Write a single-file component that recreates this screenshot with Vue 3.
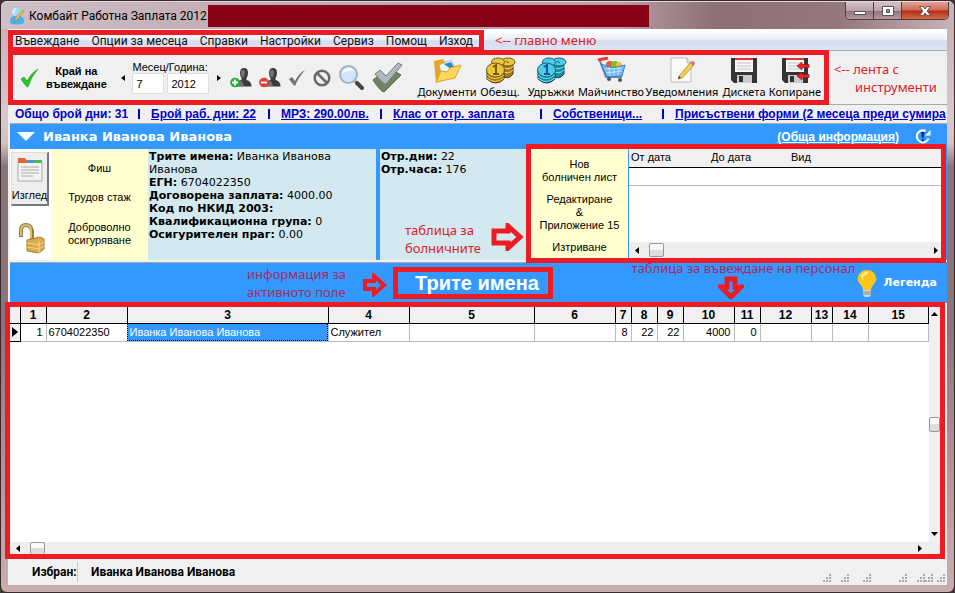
<script setup>
import { ref } from 'vue'

const month = ref('7')
const year = ref('2012')

const menu = ['Въвеждане', 'Опции за месеца', 'Справки', 'Настройки', 'Сервиз', 'Помощ', 'Изход']

const tools = [
  { label: 'Документи', icon: 'folder', width: 62 },
  { label: 'Обезщ.', icon: 'gold', width: 44 },
  { label: 'Удръжки', icon: 'blue', width: 58 },
  { label: 'Майчинство', icon: 'cart', width: 62 },
  { label: 'Уведомления', icon: 'note', width: 80 },
  { label: 'Дискета', icon: 'disk', width: 44 },
  { label: 'Копиране', icon: 'copy', width: 58 },
]

const columns = [26, 81, 201, 81, 125, 81, 16, 26, 26, 51, 26, 51, 21, 36, 0]
const row = ['1', '6704022350', 'Иванка Иванова Иванова', 'Служител', '', '', '8', '22', '22', '4000', '0', '', '', '', '']
const isNumber = (i) => [0, 6, 7, 8, 9, 10].includes(i)

const person = [
  ['Трите имена:', 'Иванка Иванова Иванова'],
  ['ЕГН:', '6704022350'],
  ['Договорена заплата:', '4000.00'],
  ['Код по НКИД 2003:', ''],
  ['Квалификационна група:', '0'],
  ['Осигурителен праг:', '0.00'],
]
</script>

<template>
  <div class="window">
    <header class="titlebar">
      <svg class="app-icon" width="16" height="18" viewBox="0 0 16 18">
        <circle cx="8" cy="5" r="4.5" fill="#9adcff" />
        <path d="M1 16Q0 8 8 9Q16 8 15 16Q8 19 1 16Z" fill="#48b0ee" />
        <path d="M3 6Q3 1 8 1Q5 4 6 8Z" fill="#d9f4ff" />
        <path d="M6 12L13 3L15 4L8 13L5 14Z" fill="#f3c44f" stroke="#a77b2a" stroke-width=".6" />
      </svg>
      <h1>Комбайт Работна Заплата 2012</h1>
      <div class="redacted"></div>
      <div class="window-buttons">
        <button type="button" aria-label="Минимизиране"><svg width="12" height="10" viewBox="0 0 12 10"><rect x=".5" y="5.5" width="11" height="3" fill="#fff" stroke="#555" /></svg></button>
        <button type="button" aria-label="Възстановяване"><svg width="12" height="10" viewBox="0 0 12 10"><path d="M.5.5h11v9H.5zM4.500 3.500v3h3v-3z" fill="#fff" fill-rule="evenodd" stroke="#555" /></svg></button>
        <button type="button" class="close" aria-label="Затваряне"><svg width="12" height="10" viewBox="0 0 12 10"><path d="M.5.5h3.500L6 3 8 .5h3.500L8 5l3.500 4.500H8L6 7 4 9.500H.5L4 5z" fill="#fff" stroke="#5d3a3a" stroke-width=".8" /></svg></button>
      </div>
    </header>

    <main class="client">
      <div class="menu-row">
        <nav class="menu"><a v-for="item in menu" :key="item" href="#">{{ item }}</a></nav>
        <span class="note">&lt;-- главно меню</span>
      </div>

      <div class="tool-row">
        <div class="toolbar">
          <button type="button" class="finish">
            <svg width="19" height="20" viewBox="0 0 19 20"><path d="M1 11L4 9L7 13Q11 5 18 1Q11 9 8 19Q6 19 1 11Z" fill="#2cc42c" stroke="#159a1a" stroke-width=".6" /></svg>
            <span>Край на<br>въвеждане</span>
          </button>
          <button type="button" class="step" aria-label="Предишен"><svg width="4" height="6" viewBox="0 0 4 6"><path d="M4 0v6L0 3z" /></svg></button>
          <fieldset class="period">
            <legend>Месец/Година:</legend>
            <input v-model="month" class="month" aria-label="Месец">
            <input v-model="year" class="year" aria-label="Година">
          </fieldset>
          <button type="button" class="step" aria-label="Следващ"><svg width="4" height="6" viewBox="0 0 4 6"><path d="M0 0v6l4-3z" /></svg></button>
          <div class="actions">
            <button v-for="kind in ['add', 'remove']" :key="kind" type="button" :aria-label="kind === 'add' ? 'Добавяне' : 'Изтриване'">
              <svg width="22" height="20" viewBox="0 0 22 20">
                <path d="M10 5Q10 0 14 0Q18 0 18 5Q18 8 16.500 10V12Q21.500 13 21.500 18.500H6Q6 13 11.500 12V10Q10 8 10 5Z" fill="#3c3c3c" />
                <path d="M11 3Q14 0 15 4Q15 8 13 10Q10 7 11 3ZM7 18Q8 14 12 13L14 18Z" fill="#737373" />
                <circle cx="5" cy="14.500" r="4.800" :fill="kind === 'add' ? '#22ae32' : '#d9423a'" />
                <path :d="kind === 'add' ? 'M5 11.500v6M2 14.500h6' : 'M2 14.500h6'" stroke="#fff" stroke-width="1.800" />
              </svg>
            </button>
            <button type="button" aria-label="Потвърждение"><svg width="18" height="18" viewBox="0 0 18 18"><path d="M1 10L4 8L7 12Q11 4 17 1Q10 9 7 17Q5 16 1 10Z" fill="#747474" /></svg></button>
            <button type="button" aria-label="Отказ"><svg width="18" height="18" viewBox="0 0 18 18"><circle cx="9" cy="9" r="7.300" fill="#eee" stroke="#686868" stroke-width="2.500" /><path d="M4 4l10 10" stroke="#686868" stroke-width="2.500" /></svg></button>
            <button type="button" aria-label="Търсене"><svg width="27" height="27" viewBox="0 0 27 27"><path d="M17 17l3 3" stroke="#aaa" stroke-width="3" /><path d="M19 19l5 5" stroke="#444" stroke-width="4" stroke-linecap="round" /><circle cx="10.500" cy="10.500" r="8.500" fill="#cfe5fa" stroke="#aab2c2" stroke-width="2" /><path d="M4 10Q5 4 11 4Q14 4 16 7Q9 6 4 10Z" fill="#f8fcff" /></svg></button>
            <button type="button" aria-label="Потвърждение на всички"><svg width="30" height="31" viewBox="0 0 30 31"><path d="M1 18l5-4 6 6L24 10l5 3L12 30Q9 30 1 18Z" fill="#6f8661" stroke="#536848" /><path d="M3 12l5-4 6 6L26 1l4 2L14 22Q11 22 3 12Z" fill="#b3b8bf" stroke="#777b81" /></svg></button>
          </div>
          <div class="big-tools">
            <button v-for="t in tools" :key="t.label" type="button" :style="{ width: t.width + 'px' }">
              <svg v-if="t.icon === 'folder'" width="30" height="27" viewBox="0 0 30 27"><path d="M2 4l9-2 2 3 5-1 1 17-15 5Z" fill="#e2a91f" /><path d="M7 8l12-5 6 11-14 8Z" fill="#eaf6ff" stroke="#9ab" stroke-width=".7" /><path d="M12 7l7-2 4 7-3 1Z" fill="#258ec7" /><path d="M4 25L9 14l6 1 3-4 11-3-6 13Z" fill="#ffd75e" stroke="#e0a51c" /></svg>
              <svg v-else-if="t.icon === 'gold' || t.icon === 'blue'" width="31" height="27" viewBox="0 0 31 27">
                <g :class="t.icon" stroke-width="1">
                  <path class="side" d="M16 6v12q7 6 12-1V5Z" /><path class="rim" d="M16 10q7 4 13-1M16 14q7 4 12-1" fill="none" />
                  <ellipse class="face" cx="23" cy="5" rx="7" ry="4" /><ellipse class="face" cx="13" cy="5" rx="6.500" ry="4" />
                  <path class="side" d="M2 14v8q9 8 17 0v-8Z" /><path class="rim" d="M2 18q8 7 17 0M2 21q8 7 17 0" fill="none" />
                  <ellipse class="face" cx="10.500" cy="13" rx="9" ry="7" />
                  <path class="mark" d="M8 10l3-2v9M8 17h6" fill="none" stroke-width="2" /><path class="mark" d="M21 4l3 2" />
                </g>
              </svg>
              <svg v-else-if="t.icon === 'cart'" width="30" height="27" viewBox="0 0 30 27"><path d="M2 3l10-2" stroke="#dd3f38" stroke-width="3" /><path d="M4 4l6 16h16" fill="none" stroke="#6d86b0" stroke-width="2" /><circle cx="14" cy="8" r="4" fill="#ed5a37" /><circle cx="19" cy="8" r="4" fill="#76bd3a" /><circle cx="23" cy="8" r="3" fill="#f6c432" /><path d="M5 7l12 4 12-3-3 11-15 1Z" fill="#75b9f0" stroke="#3d7fc4" /><path d="M8 12l18-1M10 16l16-2M13 10l1 9M18 11v8M23 10l-1 8" stroke="#d5efff" stroke-width=".8" /><circle cx="13" cy="22" r="2" fill="#456" /><circle cx="24" cy="23" r="2" fill="#456" /></svg>
              <svg v-else-if="t.icon === 'note'" width="28" height="27" viewBox="0 0 28 27"><path d="M3 1h16l4 5v19H3Z" fill="#fafafa" stroke="#bbb" /><path d="M19 1v5h4" fill="#ddd" stroke="#bbb" /><path d="M11 19L23 5l3 3-12 13-4 1Z" fill="#f5cf52" stroke="#b98a27" stroke-width=".8" /><path d="M22 6l2-2q3 0 3 3l-2 2Z" fill="#df7777" /><path d="M10 22l1-3 2 2Z" fill="#444" /></svg>
              <svg v-else width="30" height="27" viewBox="0 0 30 27"><path d="M2 1h26v25H5l-3-3Z" fill="#343434" /><path d="M6 1h18v14H6Z" fill="#f5f5f5" /><path d="M6 1h18v2H6Z" fill="#d33" /><path d="M8 6h14M8 9h14M8 12h14" stroke="#c4c4c4" /><path d="M8 18h15v8H8Z" fill="#ccc" /><path d="M10 19h4v6h-4Z" fill="#333" /><path v-if="t.icon === 'copy'" d="M17 9l5-4v2.500h7v3h-7V13ZM17 19l5-4v2.500h7v3h-7V23Z" fill="#ee2020" stroke="#941515" stroke-width=".7" /></svg>
              <span>{{ t.label }}</span>
            </button>
          </div>
        </div>
        <p class="note tools-note">&lt;-- лента с<br><span>инструменти</span></p>
      </div>

      <ul class="facts">
        <li>Общо брой дни: 31</li>
        <li><a href="#">Брой раб. дни: 22</a></li>
        <li><a href="#">МРЗ: 290.00лв.</a></li>
        <li><a href="#">Клас от отр. заплата</a></li>
        <li><a href="#">Собственици...</a></li>
        <li><a href="#">Присъствени форми (2 месеца преди сумира</a></li>
      </ul>

      <section class="employee">
        <div class="employee-head">
          <svg width="18" height="9" viewBox="0 0 18 9"><path d="M0 0h18L9 9z" fill="#fff" /></svg>
          <h2>Иванка Иванова Иванова</h2>
          <a href="#">(Обща информация)</a>
          <button type="button" aria-label="Обновяване"><svg width="16" height="15" viewBox="0 0 16 15"><path d="M10.500 2A6 6 0 1 0 13.500 9.500" fill="none" stroke="#fff" stroke-width="2" /><path d="M10 6.500h5.500V1Z" fill="#fff" /><path d="M6 3h3.500L8.500 9h-1.500ZM6.800 10.300h2v2h-2Z" fill="#052a80" /></svg></button>
        </div>
        <div class="panels">
          <div class="side-tools">
            <button type="button" class="view">
              <svg width="26" height="24" viewBox="0 0 26 24"><path d="M1 4h24v19H1Z" fill="#f3f3f3" stroke="#aaa" /><path d="M1 0h7l2 3h15v2H1Z" fill="#ec613b" /><path d="M10 2h7v3h-7Z" fill="#389cdb" /><path d="M17 2h8v3h-8Z" fill="#51b951" /><path d="M4 9h18M4 12h18M4 15h18M4 18h12" stroke="#aaa" /></svg>
              <span>Изглед</span>
            </button>
            <button type="button" class="lock" aria-label="Отключено"><svg width="28" height="31" viewBox="0 0 28 31"><path d="M3 14V7q0-5 5-5t6 6v8" fill="none" stroke="#9b7a3c" stroke-width="4" /><path d="M3 13V7q0-5 5-5t5 5v8" fill="none" stroke="#dcbd78" stroke-width="2" /><path d="M9 17l13-3 4 2v10l-5 4-12-2Z" fill="#d9ab49" stroke="#a77d2c" /><path d="M9 20l12 2 5-3M9 24l12 2 5-3M21 18v12" fill="none" stroke="#f3d891" /></svg></button>
          </div>
          <div class="links">
            <button type="button">Фиш</button>
            <button type="button">Трудов стаж</button>
            <button type="button">Доброволно<br>осигуряване</button>
          </div>
          <dl class="info">
            <div v-for="[k, v] in person" :key="k"><dt>{{ k }}</dt>{{ ' ' }}<dd>{{ v }}</dd></div>
          </dl>
          <div class="worked">
            <dl>
              <div><dt>Отр.дни:</dt>{{ ' ' }}<dd>22</dd></div>
              <div><dt>Отр.часа:</dt>{{ ' ' }}<dd>176</dd></div>
            </dl>
            <p class="note sick-note">таблица за<br>болничните</p>
            <svg class="sick-arrow" width="32" height="28" viewBox="0 0 32 28"><path d="M3 8h14V3l12 11-12 11v-5H3Z" fill="#d4e9ee" stroke="#ed1c24" stroke-width="5" /></svg>
          </div>
          <div class="sick">
            <div class="links">
              <button type="button">Нов<br>болничен лист</button>
              <button type="button">Редактиране<br>&amp;<br>Приложение 15</button>
              <button type="button">Изтриване</button>
            </div>
            <div class="sick-list">
              <table>
                <thead><tr><th>От дата</th><th>До дата</th><th>Вид</th></tr></thead>
                <tbody><tr><td></td><td></td><td></td></tr></tbody>
              </table>
              <div class="hbar">
                <svg width="4" height="7" viewBox="0 0 4 7"><path d="M4 0v7L0 3.500z" /></svg><span class="thumb"></span><svg class="end" width="4" height="7" viewBox="0 0 4 7"><path d="M0 0v7l4-3.500z" /></svg>
              </div>
            </div>
          </div>
        </div>
      </section>

      <section class="strip">
        <p class="note field-note">информация за<br>активното поле</p>
        <svg class="field-arrow" width="25" height="24" viewBox="0 0 25 24"><path d="M3 8h9V3l10 9-10 9v-5H3Z" fill="#39f" stroke="#ed1c24" stroke-width="4" /></svg>
        <h2>Трите имена</h2>
        <div class="grid-note">
          <p class="note">таблица за въвеждане на персонал</p>
          <svg width="26" height="23" viewBox="0 0 26 23"><path d="M9 3v8H3l10 10 10-10h-6V3Z" fill="#39f" stroke="#ed1c24" stroke-width="5" /></svg>
        </div>
        <button type="button" class="legend">
          <svg width="20" height="29" viewBox="0 0 20 29"><path d="M6 21Q6 18 3 15Q0 12 1 8Q3 1 10 1Q17 1 19 8Q20 12 17 15Q14 18 14 21Z" fill="#ffc51b" /><path d="M5 12Q2 6 8 3Q12 2 11 5Q6 6 5 12Z" fill="#ffec8a" /><path d="M6 21h8v5l-2 2H8l-2-2Z" fill="#d1d5d8" /><path d="M6 23h8M6 25h8" stroke="#858b93" /></svg>
          Легенда
        </button>
      </section>

      <section class="grid">
        <div class="grid-body">
          <div class="grid-scroll">
            <table>
              <colgroup><col class="pick"><col v-for="(w, i) in columns" :key="i" :style="{ width: w ? w + 'px' : 'auto' }"></colgroup>
              <thead><tr><th></th><th v-for="(w, i) in columns" :key="i">{{ i + 1 }}</th></tr></thead>
              <tbody><tr><th class="marker"><svg width="6" height="10" viewBox="0 0 6 10"><path d="M0 0v10l6-5z" /></svg></th><td v-for="(v, i) in row" :key="i" :class="{ num: isNumber(i), active: i === 2 }">{{ v }}</td></tr></tbody>
            </table>
          </div>
          <div class="vbar">
            <svg width="7" height="4" viewBox="0 0 7 4"><path d="M0 4h7L3.500 0z" /></svg><span class="thumb"></span><svg width="7" height="4" viewBox="0 0 7 4"><path d="M0 0h7L3.500 4z" /></svg>
          </div>
        </div>
        <div class="hbar">
          <svg width="4" height="7" viewBox="0 0 4 7"><path d="M4 0v7L0 3.500z" /></svg><span class="thumb"></span><svg class="end" width="4" height="7" viewBox="0 0 4 7"><path d="M0 0v7l4-3.500z" /></svg>
        </div>
      </section>

      <footer class="status">
        <span class="chosen">Избран:</span><span>Иванка Иванова Иванова</span>
        <svg width="124" height="9" viewBox="0 0 124 9"><g v-for="x in [0, 18, 40, 76, 94, 102, 114]" :key="x" fill="#aaa"><path :d="`M${x + 6} 0h2v2h-2zM${x + 3} 3h2v2h-2zM${x + 6} 3h2v2h-2zM${x} 6h2v2h-2zM${x + 3} 6h2v2h-2zM${x + 6} 6h2v2h-2z`" /></g></svg>
      </footer>
    </main>
  </div>
</template>

<style>
body { background: #3b3438; }
</style>

<style scoped>
* { box-sizing: border-box; margin: 0; padding: 0; }
button { border: 0; background: none; font: inherit; color: inherit; }
svg { display: block; flex: none; }
.window {
  min-height: 100vh; display: flex; flex-direction: column; padding: 0 7px 7px;
  font: 11px/13px "Liberation Sans", sans-serif; color: #000;
  background: linear-gradient(#c9a9ae, #d9c9cb 20%, #d6c0c0 24%, #8b7479 28%, #8b7479 55%, #c0a3a5 90%, #c9adad);
  border: 1px solid #35292d; border-radius: 7px;
}
.titlebar {
  height: 28px; display: flex; align-items: center; margin: 0 -7px; padding-left: 8px;
  border-radius: 6px 6px 0 0; border-top: 1px solid #e5d8dc;
  background: linear-gradient(90deg, #cfc0c8, #c4b0b6 20%, #b99da3 65%, #8d6f75 75%, #96777d 88%, #c9b4b8);
}
.titlebar h1 { font: 12px/16px Roboto, sans-serif; margin-left: 4px; white-space: nowrap; }
.redacted { height: 22px; margin-left: 1px; background: #880015; flex: 0 1 441px; }
.window-buttons { display: flex; align-self: flex-start; margin: 0 5px 0 auto; border: 1px solid #4c3b40; border-top: 0; border-radius: 0 0 5px 5px; overflow: hidden; }
.window-buttons button { width: 28px; height: 17px; display: grid; place-items: center; background: linear-gradient(#d5c3c8, #b9a2a8 50%, #8e7279 52%, #b59aa2); border-right: 1px solid #4c3b40; }
.window-buttons .close { width: 46px; border: 0; background: linear-gradient(#e3a598, #cd6a56 48%, #b52c17 52%, #d46a46); }
.client { flex: 1; display: flex; flex-direction: column; background: #f0f0f0; border-top: 1px solid #fff; min-width: 0; }
.note { font: 13px/18px "Noto Sans", sans-serif; color: #d8232c; white-space: nowrap; }

.menu-row { display: flex; align-items: center; height: 20px; background: linear-gradient(#fff, #eef1fa 45%, #d5dcee 55%, #dfe5f3); }
.menu { display: flex; gap: 12px; height: 20px; width: 476px; padding-left: 2px; border: 5px solid #ed1c24; border-bottom-width: 3px; }
.menu a { font: 12px/12px Roboto, sans-serif; color: #111; text-decoration: none; white-space: nowrap; }
.menu-row .note { margin-left: 11px; }

.tool-row { display: flex; height: 55px; border-top: 1px solid #aaa; border-bottom: 1px solid #aaa; }
.toolbar { display: flex; align-items: center; width: 821px; margin: -1px 0; padding-left: 7px; border: 5px solid #ed1c24; }
.finish { display: flex; align-items: center; gap: 7px; width: 96px; font-weight: bold; }
.finish span { white-space: nowrap; }
.step { width: 16px; display: grid; place-items: center; }
.period { border: 0; display: flex; gap: 3px; width: 80px; padding-left: 1px; white-space: nowrap; }
.period legend { line-height: 12px; font-size: 11px; }
.period input { height: 21px; border: 1px solid #dadde3; border-radius: 2px; padding: 0 3px; font: 11px "Liberation Sans", sans-serif; background: #fff; }
.period .month { width: 32px; }
.period .year { width: 42px; }
.actions { display: flex; align-items: center; gap: 7px; margin-left: 3px; width: 187px; }
.big-tools { display: flex; }
.big-tools button { display: flex; flex-direction: column; align-items: center; font: 11px/15px "Noto Sans", sans-serif; white-space: nowrap; }
.gold .side { fill: #a87919; stroke: #49340a; }
.gold .face { fill: #eac73b; stroke: #755515; }
.gold .rim { stroke: #f6db59; }
.gold .mark { stroke: #7d5b0a; }
.blue .side { fill: #168fa5; stroke: #083e4c; }
.blue .face { fill: #4fcce5; stroke: #126577; }
.blue .rim { stroke: #7ae8f5; }
.blue .mark { stroke: #13559b; }
.tools-note { margin: 9px 0 0 5px; }
.tools-note span { margin-left: 21px; }

.facts { list-style: none; display: grid; grid-template-columns: 136px 130px 112px 160px 122px 1fr; align-items: center; height: 18px; padding-left: 7px; overflow: hidden; font: bold 12px/14px "Liberation Sans", sans-serif; color: #00c; white-space: nowrap; }
.facts li { display: flex; align-items: center; justify-content: space-between; min-width: 0; }
.facts li:not(:last-child)::after { content: ""; width: 2px; height: 10px; background: #00c; margin-right: 11px; }
.facts a { color: #00c; }

.employee { border-top: 1px solid #aaa; margin-left: 2px; background: #39f; }
.employee-head { display: flex; align-items: center; height: 25px; padding: 0 16px 0 7px; color: #fff; }
.employee-head h2 { font: bold 13px/16px "DejaVu Sans", sans-serif; margin: 0 auto 0 8px; }
.employee-head a { color: #fff; font: bold 12px/14px "Liberation Sans", sans-serif; margin-right: 16px; }
.panels { display: flex; height: 111px; }
.side-tools { width: 41px; flex: none; background: #fff; padding: 3px 1px; }
.view { width: 38px; height: 54px; background: #eee; border: 1px solid #ddd; border-right: 2px solid #777; border-bottom: 2px solid #777; display: flex; flex-direction: column; align-items: center; justify-content: space-between; padding: 5px 0 2px; }
.lock { margin: 17px 0 0 7px; }
.links { width: 97px; flex: none; background: #ffffcf; display: flex; flex-direction: column; justify-content: space-around; padding: 5px 0; }
.info, .worked { background: #d3e9ef; font: 11px/13px "DejaVu Sans", sans-serif; padding: 1px; }
.info { flex: 2 1 228px; margin-right: 4px; }
.panels dt, .panels dd { display: inline; }
.panels dt { font-weight: bold; }
.worked { flex: 1 1 147px; position: relative; }
.sick-note { position: absolute; left: 25px; top: 72px; }
.sick-arrow { position: absolute; right: 4px; top: 74px; }
.sick { flex: 4 1 420px; display: flex; position: relative; z-index: 1; margin: -5px 1px -3px -1px; border: 5px solid #ed1c24; }
.sick .links { padding: 4px 0 0; }
.sick-list { flex: 1; border-left: 1px solid #39f; background: #fff; display: flex; flex-direction: column; min-width: 0; }
.sick-list table { width: 100%; border-collapse: collapse; table-layout: fixed; }
.sick-list th { width: 80px; height: 18px; font-weight: normal; text-align: left; padding-left: 2px; background: #f0f0f0; border-bottom: 1px solid #000; }
.sick-list th:last-child { width: auto; }
.sick-list td { height: 18px; border-bottom: 1px solid #bbb; }
.hbar { display: flex; align-items: center; gap: 10px; height: 16px; margin-top: auto; padding: 0 3px 0 6px; background: #eee; }
.hbar .thumb { width: 15px; height: 14px; }
.thumb { border: 1px solid #999; border-radius: 2px; background: linear-gradient(#fafafa 45%, #ddd 50%); }
.end { margin-left: auto; }

.strip { display: flex; align-items: center; height: 41px; margin: 2px 0 0 2px; border-top: 1px solid #aaa; background: #39f; color: #fff; padding: 0 10px 0 237px; }
.field-arrow { margin: 4px 6px 0 16px; }
.strip .note { color: #a52c62; line-height: 18px; }
.strip h2 { width: 160px; height: 32px; flex: none; border: 5px solid #ed1c24; padding-left: 8px; text-align: center; font: bold 20px/22px "Liberation Sans", sans-serif; }
.grid-note { align-self: stretch; display: flex; flex-direction: column; align-items: center; margin: -2px 2px 0 auto; }
.grid-note .note { line-height: 15px; }
.grid-note svg { margin-right: 24px; }
.legend { display: flex; align-items: center; gap: 6px; font: bold 11px/14px "DejaVu Sans", sans-serif; }

.grid { flex: 1; display: flex; flex-direction: column; position: relative; min-height: 200px; margin: -1px 2px 0 -3px; border: 5px solid #ed1c24; background: #fff; }
.grid-body { flex: 1; display: flex; }
.grid-scroll { flex: 1; min-width: 0; }
.grid table { width: 100%; table-layout: fixed; border-collapse: collapse; }
.pick { width: 10px; }
.grid th { height: 16px; font: bold 12px/14px "Liberation Sans", sans-serif; background: #f0f0f0; border-right: 1px solid #000; border-bottom: 1px solid #000; }
.grid td { height: 18px; font: 11px/14px "Liberation Sans", sans-serif; padding: 0 2px; border-right: 1px solid #bbb; border-bottom: 1px solid #bbb; white-space: nowrap; }
.grid .num { text-align: right; padding-right: 3px; }
.grid .active { background: #39f; color: #fff; outline: 1px dotted #000; outline-offset: -1px; }
.marker svg { margin-left: 2px; }
.vbar { width: 11px; display: flex; flex-direction: column; align-items: center; justify-content: space-between; padding: 5px 0 6px; background: #f0f0f0; }
.vbar .thumb { width: 11px; height: 15px; }
.grid .hbar { height: 12px; padding-right: 18px; }
.grid .hbar .thumb { height: 12px; border-bottom: 0; }

.status { display: flex; align-items: center; height: 26px; padding-left: 24px; font: bold 12px/14px Roboto, sans-serif; white-space: nowrap; }
.chosen { width: 46px; height: 20px; line-height: 20px; margin-right: 13px; border-right: 1px solid #ccc; }
.status svg { margin: 12px 0 0 auto; }
</style>
